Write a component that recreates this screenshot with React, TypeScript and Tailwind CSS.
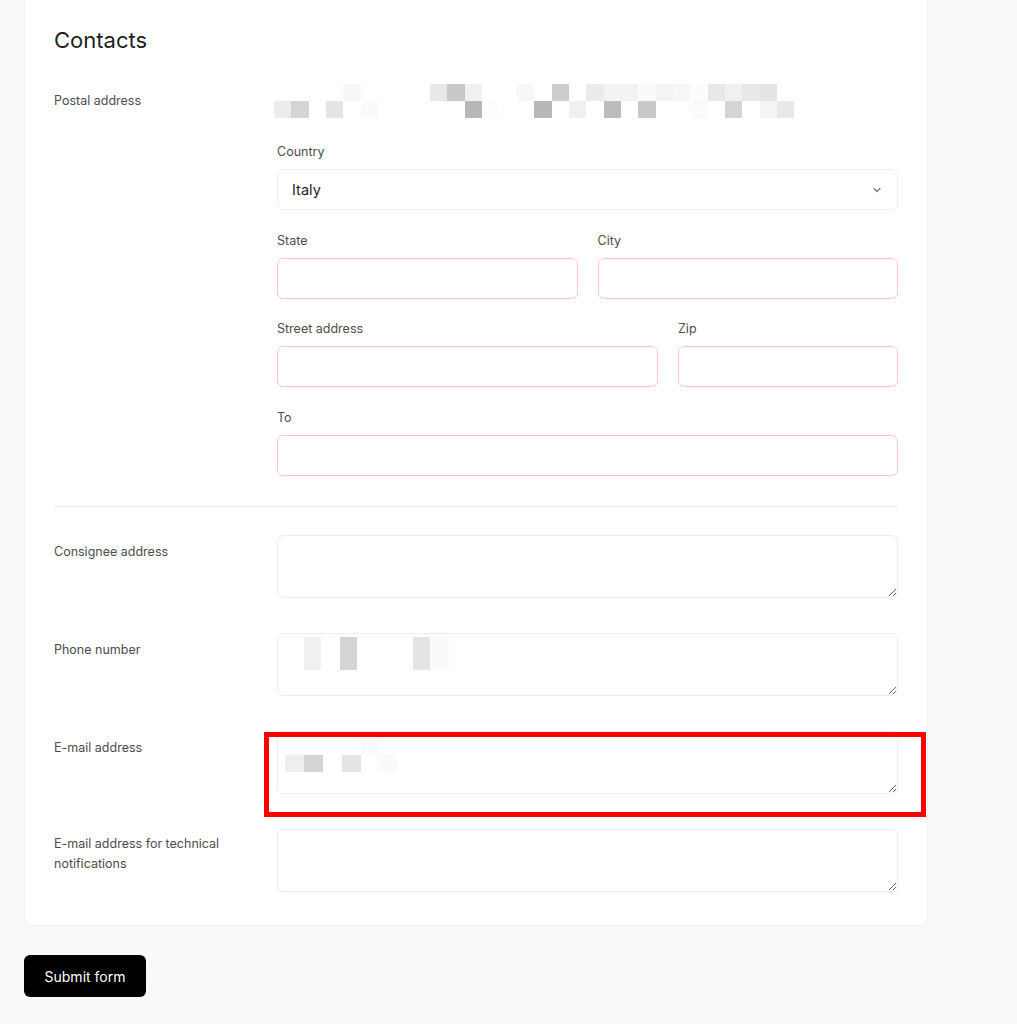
import React from 'react';
import { ChevronDown } from 'lucide-react';

// redacted address pixels: [column, gray]
const addressRows: [number, string][][] = [
  [[4, '#f8f8f8'], [9, '#e8e8e8'], [10, '#c8c8c8'], [11, '#f0f0f0'], [14, '#f8f8f8'], [16, '#cccccc'], [18, '#ebebeb'], [19, '#f3f3f3'], [20, '#f3f3f3'], [21, '#fafafa'], [22, '#f4f4f4'], [23, '#f6f6f6'], [24, '#fcfcfc'], [25, '#e8e8e8'], [26, '#f0f0f0'], [27, '#e8e8e8'], [28, '#e4e4e4']],
  [[0, '#ececec'], [1, '#d4d4d4'], [3, '#e4e4e4'], [5, '#fafafa'], [11, '#b8b8b8'], [12, '#fdfdfd'], [15, '#b8b8b8'], [17, '#f0f0f0'], [19, '#bcbcbc'], [21, '#c8c8c8'], [24, '#fbfbfb'], [26, '#d4d4d4'], [28, '#f4f4f4'], [29, '#e8e8e8']],
];

const PixelRow = ({ cells, count }: { cells: [number, string][]; count: number }) => {
  const map = new Map(cells);
  return (
    <div className="flex">
      {Array.from({ length: count }).map((_, i) => (
        <div key={i} className="h-[17px] w-[17.35px]" style={{ backgroundColor: map.get(i) ?? 'transparent' }} />
      ))}
    </div>
  );
};

const Field = ({ label, className = '' }: { label: string; className?: string }) => (
  <div className={className}>
    <div className="text-[12.5px] leading-4 text-[#4d4d4d] pt-px mb-[9px]">{label}</div>
    <input className="w-full h-[41px] rounded-md border border-[#fdc8c8] bg-white px-3 outline-none" />
  </div>
);

const Row = ({ label, children }: { label: React.ReactNode; children: React.ReactNode }) => (
  <div className="grid grid-cols-[223px_1fr]">
    <div className="text-[12.5px] leading-5 text-[#4d4d4d] pt-[7px] pr-4">{label}</div>
    <div>{children}</div>
  </div>
);

const Area = ({ children }: { children?: React.ReactNode }) => (
  <div className="relative">
    <textarea className="block w-full h-[63px] rounded-md border border-[#e9eef0] bg-white px-3 py-2 outline-none resize-y" />
    {children}
  </div>
);

const App = () => {
  return (
    <div className="min-h-[1024px] bg-[#f8f9f9] px-6 pb-8" style={{ fontFamily: 'Inter, "Noto Sans", sans-serif' }}>
      <div className="w-[904px] bg-white border border-t-0 border-[#eef0f0] rounded-b-lg px-[29px] pt-6 pb-[33px]">
        <h2 className="text-[22px] leading-8 text-[#1f1f1f]">Contacts</h2>

        <div className="mt-7 grid grid-cols-[223px_1fr]">
          <div className="text-[12.5px] leading-4 text-[#4d4d4d] pt-[9px]">Postal address</div>
          <div>
            <div className="-ml-[3px]">
              {addressRows.map((r, i) => (
                <PixelRow key={i} cells={r} count={31} />
              ))}
            </div>

            <div className="mt-[25px]">
              <div className="text-[12.5px] leading-4 text-[#4d4d4d] pt-px mb-[9px]">Country</div>
              <div className="relative h-[41px] rounded-md border border-[#eceff2] bg-white flex items-center px-[14px] text-[14.5px] text-[#1f1f1f]">
                Italy
                <ChevronDown className="absolute right-[14px] top-1/2 -translate-y-1/2 h-3 w-3 text-[#777]" strokeWidth={2.5} />
              </div>
            </div>

            <div className="mt-[22px] grid grid-cols-2 gap-5">
              <Field label="State" />
              <Field label="City" />
            </div>

            <div className="mt-[21px] grid grid-cols-[1fr_220px] gap-5">
              <Field label="Street address" />
              <Field label="Zip" />
            </div>

            <Field label="To" className="mt-[22px]" />
          </div>
        </div>

        <div className="mt-[30px] mb-[28px] border-t border-[#eeeeee]" />

        <div className="flex flex-col gap-[35px]">
          <Row label="Consignee address">
            <Area />
          </Row>
          <Row label="Phone number">
            <Area>
              <div className="pointer-events-none absolute left-[27px] top-[4px] flex">
                <div className="h-[33px] w-[17px] bg-[#f0f0f0]" />
                <div className="h-[33px] w-[19px]" />
                <div className="h-[33px] w-[17px] bg-[#d4d4d4]" />
                <div className="h-[33px] w-[56px]" />
                <div className="h-[33px] w-[17px] bg-[#e4e4e4]" />
                <div className="h-[33px] w-[19px] bg-[#fafafa]" />
              </div>
            </Area>
          </Row>
          <Row label="E-mail address">
            <Area>
              <div className="pointer-events-none absolute left-[8px] top-[7px]">
                <div className="flex">
                  <div className="h-[17px] w-[76px]" />
                  <div className="h-[17px] w-[17px] bg-[#fafafa]" />
                </div>
                <div className="flex">
                  <div className="h-[17px] w-[19px] bg-[#eeeeee]" />
                  <div className="h-[17px] w-[19px] bg-[#d4d4d4]" />
                  <div className="h-[17px] w-[19px]" />
                  <div className="h-[17px] w-[19px] bg-[#e4e4e4]" />
                  <div className="h-[17px] w-[17px]" />
                  <div className="h-[17px] w-[19px] bg-[#fafafa]" />
                </div>
              </div>
              <div className="pointer-events-none absolute -left-[13px] top-[1px] w-[662px] h-[85px] border-[5px] border-[#ff0000]" />
            </Area>
          </Row>
          <Row label={<span className="block -mt-[2px]">E-mail address for technical notifications</span>}>
            <Area />
          </Row>
        </div>
      </div>

      <button className="mt-[29px] h-[42px] w-[122px] rounded-md bg-black text-white text-[14px]">Submit form</button>
    </div>
  );
};

export default App;
